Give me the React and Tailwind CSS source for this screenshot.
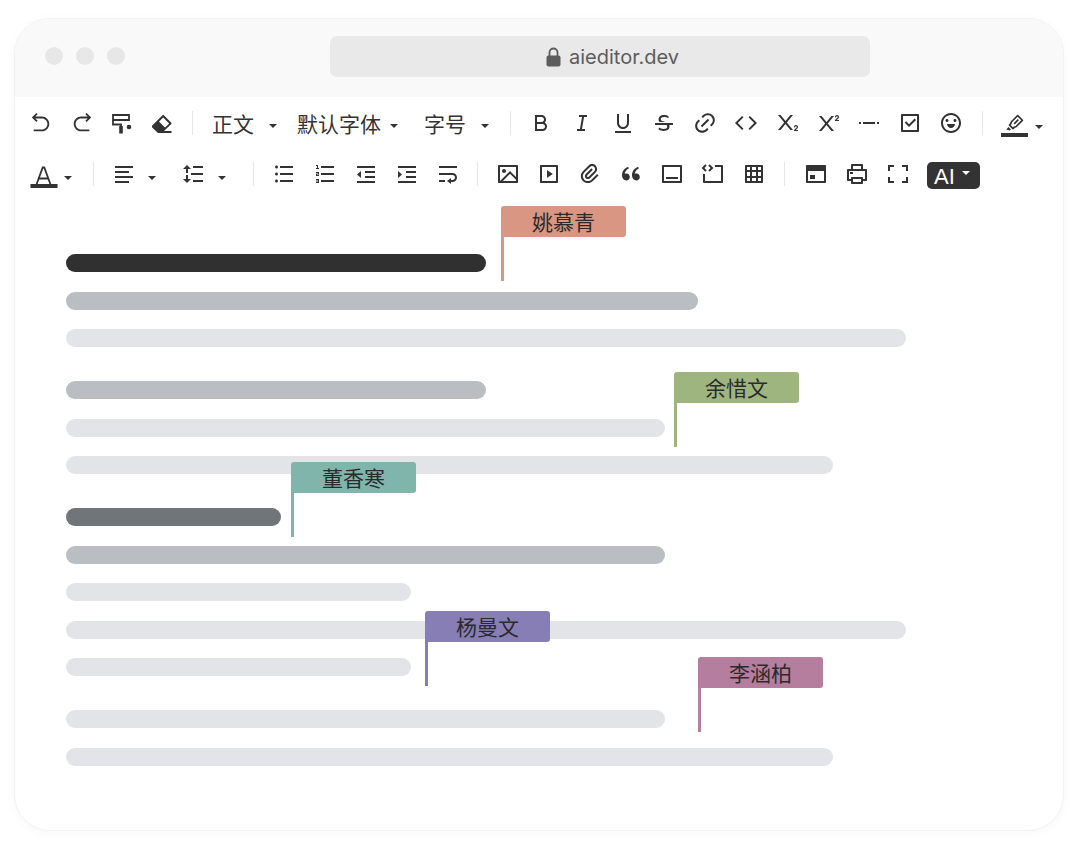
import {
  RiArrowGoBackLine, RiArrowGoForwardLine, RiBold, RiItalic, RiUnderline, RiStrikethrough,
  RiLink, RiCodeLine, RiSubscript, RiSuperscript, RiSeparator, RiCheckboxLine, RiEmotionLine,
  RiMarkPenLine, RiAlignLeft, RiLineHeight, RiListUnordered, RiListOrdered, RiIndentDecrease,
  RiIndentIncrease, RiTextWrap, RiImageLine, RiVideoLine, RiAttachment2, RiDoubleQuotesL,
  RiLayoutBottom2Line, RiCodeBlock, RiGridLine, RiPrinterLine, RiFullscreenLine,
} from "react-icons/ri";

function Painter({ className }) {
  return (
    <svg viewBox="2 -1 24 24" className={className} fill="none" stroke="currentColor" strokeWidth="1.8" aria-hidden="true">
      <path d="M4 3H20V8H4Z" />
      <path d="M4 8V12.500H12V15" />
      <path d="M10.200 14H13.800V21.500H10.200Z" fill="currentColor" stroke="none" />
      <circle cx="20" cy="15" r="2.300" fill="currentColor" stroke="none" />
    </svg>
  );
}

function Eraser({ className }) {
  return (
    <svg viewBox="2 -1 24 24" className={className} fill="currentColor" aria-hidden="true">
      <path fillRule="evenodd" d="M14 19H21.500V21H8L2 15.200C1.600 14.800 1.600 14.200 2 13.800L12.500 3.300C12.900 2.900 13.500 2.900 13.900 3.300L21.300 10.700C21.700 11.100 21.700 11.700 21.300 12.100ZM13.200 5.400L9 9.600L15 15.600L19.200 11.400Z" />
    </svg>
  );
}

function UndoIcon() {
  return <RiArrowGoBackLine className="size-[22px]" />;
}

function RedoIcon() {
  return <RiArrowGoForwardLine className="size-[22px]" />;
}

function Callout({ className }) {
  return (
    <svg viewBox="0 0 24 24" className={className} fill="currentColor" aria-hidden="true">
      <path fillRule="evenodd" d="M3 3H21C21.6 3 22 3.4 22 4V20C22 20.6 21.6 21 21 21H3C2.4 21 2 20.6 2 20V4C2 3.4 2.4 3 3 3ZM4 9V19H20V9ZM6 13H11V17H6Z" />
    </svg>
  );
}

function LetterA({ className }) {
  return (
    <svg viewBox="0 0 28 24" className={className} fill="none" stroke="currentColor" strokeWidth="1.8" aria-hidden="true">
      <path d="M6.500 20.500L12.700 3.500H14.300L20.500 20.500M9 14.500H18" />
      <path d="M0.500 22H27.500" strokeWidth="4" />
    </svg>
  );
}

function Highlighter() {
  return (
    <span className="flex w-[27px] flex-col items-center pt-1">
      <RiMarkPenLine className="size-5" aria-hidden="true" />
      <span className="h-1 w-full bg-[#333333]" />
    </span>
  );
}

function Caret({ className = "" }) {
  return (
    <svg viewBox="0 0 8 4" className={`h-1 w-2 fill-current ${className}`} aria-hidden="true">
      <path d="M0 0H8L4 4Z" />
    </svg>
  );
}

function Tool({ icon: Icon, label }) {
  return (
    <button type="button" aria-label={label} className="flex h-10 w-[41px] shrink-0 items-center justify-center">
      <Icon className="size-6" />
    </button>
  );
}

function Separator({ className = "mx-2" }) {
  return <span className={`h-6 w-px shrink-0 bg-[#e6e6e6] ${className}`} />;
}

function Picker({ label, value, className }) {
  return (
    <label className={`grid shrink-0 items-center pt-[3px] text-[21px] ${className}`}>
      <select aria-label={label} defaultValue={value} className="col-start-1 row-start-1 h-10 w-full appearance-none bg-transparent">
        <option>{value}</option>
      </select>
      <Caret className="pointer-events-none col-start-1 row-start-1 mt-1 justify-self-end" />
    </label>
  );
}

function MenuTool({ label, children, className }) {
  return (
    <button type="button" aria-label={label} aria-haspopup="menu" className={`flex h-10 shrink-0 items-center justify-between ${className}`}>
      {children}
      <Caret className="mt-2" />
    </button>
  );
}

const inline = [
  [RiBold, "加粗"], [RiItalic, "斜体"], [RiUnderline, "下划线"], [RiStrikethrough, "删除线"],
  [RiLink, "链接"], [RiCodeLine, "行内代码"], [RiSubscript, "下标"], [RiSuperscript, "上标"],
  [RiSeparator, "分割线"], [RiCheckboxLine, "任务列表"], [RiEmotionLine, "表情"],
];
const lists = [
  [RiListUnordered, "无序列表"], [RiListOrdered, "有序列表"], [RiIndentDecrease, "减少缩进"],
  [RiIndentIncrease, "增加缩进"], [RiTextWrap, "换行"],
];
const inserts = [
  [RiImageLine, "图片"], [RiVideoLine, "视频"], [RiAttachment2, "附件"], [RiDoubleQuotesL, "引用"],
  [RiLayoutBottom2Line, "容器"], [RiCodeBlock, "代码块"], [RiGridLine, "表格"],
];
const views = [[Callout, "高亮块"], [RiPrinterLine, "打印"], [RiFullscreenLine, "全屏"]];

const tools = (list) => list.map(([icon, label]) => <Tool key={label} icon={icon} label={label} />);

const groups = [
  { height: "h-[93px]", bars: ["w-[50%] bg-[#303030]", "w-[75.2%] bg-[#babdc2]", "w-full bg-[#e3e4e8]"] },
  { height: "h-[93px]", bars: ["w-[50%] bg-[#babdc2]", "w-[71.3%] bg-[#e3e4e8]", "w-[91.3%] bg-[#e3e4e8]"] },
  {
    height: "h-[168px]",
    bars: ["w-[25.6%] bg-[#70757a]", "w-[71.3%] bg-[#babdc2]", "w-[41.1%] bg-[#e3e4e8]", "w-full bg-[#e3e4e8]", "w-[41.1%] bg-[#e3e4e8]"],
  },
  { height: "h-14", bars: ["w-[71.3%] bg-[#e3e4e8]", "w-[91.3%] bg-[#e3e4e8]"] },
];

const cursors = [
  { name: "姚慕青", place: "left-[435px] -top-[48px]", flag: "bg-[#d99682]" },
  { name: "余惜文", place: "left-[608px] top-[118px]", flag: "bg-[#9fb57f]" },
  { name: "董香寒", place: "left-[225px] top-[208px]", flag: "bg-[#80b5ac]" },
  { name: "杨曼文", place: "left-[359px] top-[357px]", flag: "bg-[#867eb5]" },
  { name: "李涵柏", place: "left-[632px] top-[403px]", flag: "bg-[#b57e9e]" },
];

export default function App() {
  return (
    <main className="bg-white pt-[18px] pr-[15px] pb-[29px] pl-[14px] font-['Noto_Sans_CJK_SC',sans-serif] text-[#333333]">
      <div className="overflow-hidden rounded-[36px] border border-[#f2f2f2] bg-white pb-16 shadow-[0_2px_12px_rgba(0,0,0,0.03)]">
        <header className="flex h-[78px] items-center bg-[#f9f9f9] pb-[3px] pl-[30px]">
          <div className="flex gap-[13px] pb-[2px]">
            <span className="size-[18px] rounded-full bg-[#e7e7e7]" />
            <span className="size-[18px] rounded-full bg-[#e7e7e7]" />
            <span className="size-[18px] rounded-full bg-[#e7e7e7]" />
          </div>
          <div className="flex flex-1 justify-center pl-3">
            <label className="flex h-[41px] w-full max-w-[540px] items-center justify-center gap-2 rounded-[7px] bg-[#e9e9e9] pt-px pl-[27px] text-[#5c5c5c]">
              <svg viewBox="0 0 15 20" className="h-5 w-[15px]" aria-hidden="true">
                <path d="M3.500 9V5.500A4 4 0 0 1 11.500 5.500V9" fill="none" stroke="currentColor" strokeWidth="1.800" />
                <rect x="0.500" y="8.500" width="14" height="11" rx="2" fill="currentColor" />
              </svg>
              <input aria-label="网址" readOnly value="aieditor.dev" className="w-28 bg-transparent font-[Inter,sans-serif] text-xl" />
            </label>
          </div>
        </header>

        <div role="toolbar" aria-label="编辑器工具栏" className="px-[5px] pt-1">
          <div className="flex items-center">
            <Tool icon={UndoIcon} label="撤销" />
            <Tool icon={RedoIcon} label="重做" />
            <Tool icon={Painter} label="格式刷" />
            <Tool icon={Eraser} label="清除格式" />
            <Separator />
            <Picker label="段落" value="正文" className="ml-[11px] w-[65px]" />
            <Picker label="字体" value="默认字体" className="ml-5 w-[101px]" />
            <Picker label="字号" value="字号" className="ml-[26px] w-[65px]" />
            <Separator className="ml-[21px] mr-[9px]" />
            {tools(inline)}
            <Separator className="mx-[11px]" />
            <MenuTool label="高亮" className="ml-[7px] w-[42px]"><Highlighter /></MenuTool>
          </div>
          <div className="mt-[10px] flex items-center">
            <MenuTool label="文字颜色" className="ml-[10px] w-[42px]"><LetterA className="mt-1 h-6 w-7" /></MenuTool>
            <Separator className="ml-[21px] mr-[18px]" />
            <MenuTool label="对齐" className="w-11"><RiAlignLeft className="size-6" /></MenuTool>
            <MenuTool label="行高" className="ml-[26px] w-11"><RiLineHeight className="size-6" /></MenuTool>
            <Separator className="ml-[27px] mr-[9px]" />
            {tools(lists)}
            <Separator className="mx-[9px]" />
            {tools(inserts)}
            <Separator className="mx-[10px]" />
            {tools(views)}
            <button type="button" aria-haspopup="menu" className="mt-[3px] ml-[9px] flex h-[27px] w-[53px] shrink-0 items-center justify-between rounded-[5px] bg-[#333333] pt-[2px] pr-[10px] pl-[7px] font-['Liberation_Sans',sans-serif] text-[22px] text-white">
              AI
              <Caret className="mb-2" />
            </button>
          </div>
        </div>

        <article className="px-[51px] pt-[60px]">
          <div className="relative flex max-w-[840px] flex-col gap-[34px]">
            {groups.map((group, i) => (
              <div key={i} className={`flex flex-col justify-between ${group.height}`}>
                {group.bars.map((bar, j) => (
                  <div key={j} className={`h-[18px] rounded-full ${bar}`} />
                ))}
              </div>
            ))}
            {cursors.map(({ name, place, flag }) => (
              <div key={name} className={`absolute ${place}`}>
                <div className={`flex h-[31px] w-[125px] items-center justify-center rounded-[3px] text-[21px] text-[#2b2b2b] ${flag}`}>{name}</div>
                <div className={`-mt-1 h-12 w-[3px] ${flag}`} />
              </div>
            ))}
          </div>
        </article>
      </div>
    </main>
  );
}
